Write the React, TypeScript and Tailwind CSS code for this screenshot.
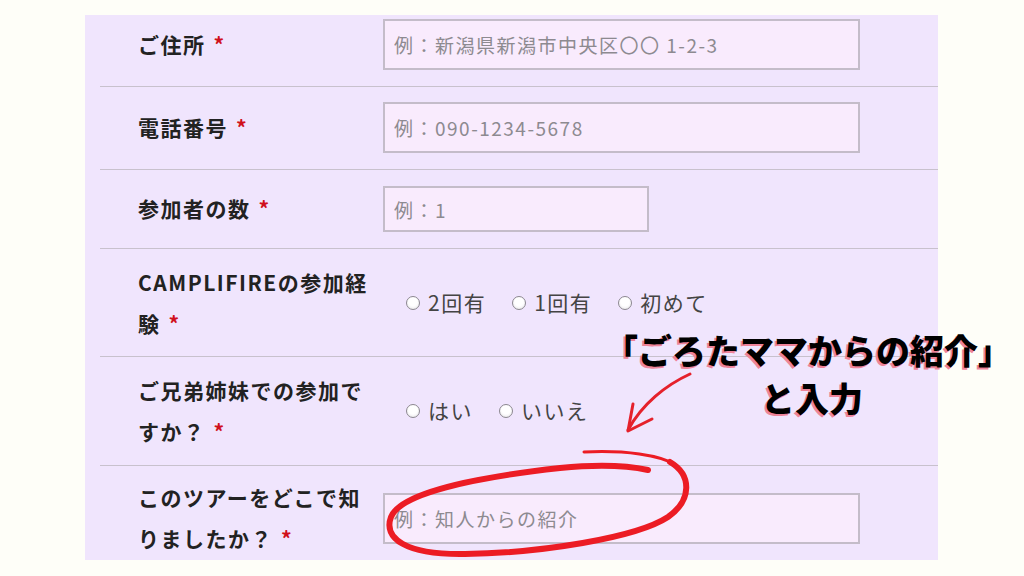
import React from 'react'

const jp = { fontFamily: '"Noto Sans CJK JP", "Noto Sans", sans-serif' }

const Req = () => <span className="ml-[8px] text-[#d0101c]">*</span>

const Radio = ({ label }: { label: string }) => (
    <label className="flex items-center gap-[8px]">
        <span className="w-[14px] h-[14px] rounded-full border-[1.5px] border-[#8c8890] bg-[radial-gradient(circle_at_50%_40%,#ffffff_45%,#e2e0e4_100%)]" />
        <span>{label}</span>
    </label>
)

const Field = ({ placeholder, w }: { placeholder: string; w: string }) => (
    <input
        readOnly
        placeholder={placeholder}
        className={`${w} h-full border-[2px] border-[#c4bcc9] bg-[#f9ebfd] pl-[9px] text-[19px] tracking-[1.5px] text-[#555] placeholder:text-[#8d8a90] outline-none`}
    />
)

const App = () => {
    return (
        <div className="relative w-[1024px] h-[576px] overflow-hidden bg-[#fefef8] pt-[15px] pl-[85px]" style={jp}>
            <div className="w-[853px] h-[545px] overflow-hidden bg-[#f0e5fd]">
                {/* ご住所 */}
                <div className="ml-[15px] flex items-center border-b border-[#c8c1cd] pl-[38px] pt-[4px] pb-[16px]">
                    <div className="w-[245px] text-[21px] font-bold tracking-[1.5px] text-[#222]">ご住所<Req /></div>
                    <div className="h-[51px]"><Field w="w-[477px]" placeholder="例：新潟県新潟市中央区〇〇 1-2-3" /></div>
                </div>

                {/* 電話番号 */}
                <div className="ml-[15px] flex items-center border-b border-[#c8c1cd] pl-[38px] pt-[15px] pb-[16px]">
                    <div className="w-[245px] text-[21px] font-bold tracking-[1.5px] text-[#222]">電話番号<Req /></div>
                    <div className="h-[51px]"><Field w="w-[477px]" placeholder="例：090-1234-5678" /></div>
                </div>

                {/* 参加者の数 */}
                <div className="ml-[15px] flex items-center border-b border-[#c8c1cd] pl-[38px] pt-[16px] pb-[16px]">
                    <div className="w-[245px] text-[21px] font-bold tracking-[1.5px] text-[#222]">参加者の数<Req /></div>
                    <div className="h-[46px]"><Field w="w-[266px]" placeholder="例：1" /></div>
                </div>

                {/* CAMPLIFIRE */}
                <div className="ml-[15px] flex h-[108px] items-center border-b border-[#c8c1cd] pl-[38px]">
                    <div className="w-[245px] whitespace-nowrap text-[21px] font-bold leading-[41px] tracking-[1.5px] text-[#222]">
                        CAMPLIFIREの参加経<br />験<Req />
                    </div>
                    <div className="flex gap-[26px] pl-[23px] text-[21px] tracking-[1.5px] text-[#444]">
                        <Radio label="2回有" />
                        <Radio label="1回有" />
                        <Radio label="初めて" />
                    </div>
                </div>

                {/* 兄弟姉妹 */}
                <div className="ml-[15px] flex h-[109px] items-center border-b border-[#c8c1cd] pl-[38px]">
                    <div className="w-[245px] whitespace-nowrap text-[21px] font-bold leading-[41px] tracking-[1.5px] text-[#222]">
                        ご兄弟姉妹での参加で<br />すか？<Req />
                    </div>
                    <div className="flex gap-[26px] pl-[23px] text-[21px] tracking-[1.5px] text-[#444]">
                        <Radio label="はい" />
                        <Radio label="いいえ" />
                    </div>
                </div>

                {/* このツアー */}
                <div className="ml-[15px] flex h-[104px] items-center pl-[38px]">
                    <div className="w-[245px] whitespace-nowrap text-[21px] font-bold leading-[41px] tracking-[1.5px] text-[#222]">
                        このツアーをどこで知<br />りましたか？<Req />
                    </div>
                    <div className="h-[51px]"><Field w="w-[477px]" placeholder="例：知人からの紹介" /></div>
                </div>
            </div>

            {/* annotation */}
            <div className="absolute left-[604px] top-[330px] text-[34px] font-black leading-[40px] text-black [text-shadow:-2px_2px_0_#ee8399]">
                「ごろたママからの紹介」
            </div>
            <div className="absolute left-[761px] top-[378px] text-[34px] font-black leading-[40px] text-black [text-shadow:-2px_2px_0_#ee8399]">
                と入力
            </div>

            <svg className="absolute left-0 top-0" width="1024" height="576" viewBox="0 0 1024 576" fill="none">
                <path d="M690 374 C666 385 642 404 628 430" stroke="#e5212b" strokeWidth="3" strokeLinecap="round" />
                <path d="M633 404 L628 431 L652 419" stroke="#e5212b" strokeWidth="3" strokeLinecap="round" strokeLinejoin="round" />
                <path d="M584 452 C625 450 660 455 676 465" stroke="#ec1c24" strokeWidth="3" strokeLinecap="round" />
                <path d="M670 462 C692 475 692 500 668 517 C636 538 540 553 465 554 C405 555 383 538 391 517 C400 494 470 478 560 468 C600 464 625 465 648 470" stroke="#ec1c24" strokeWidth="6" strokeLinecap="round" />
            </svg>
        </div>
    )
}

export default App
